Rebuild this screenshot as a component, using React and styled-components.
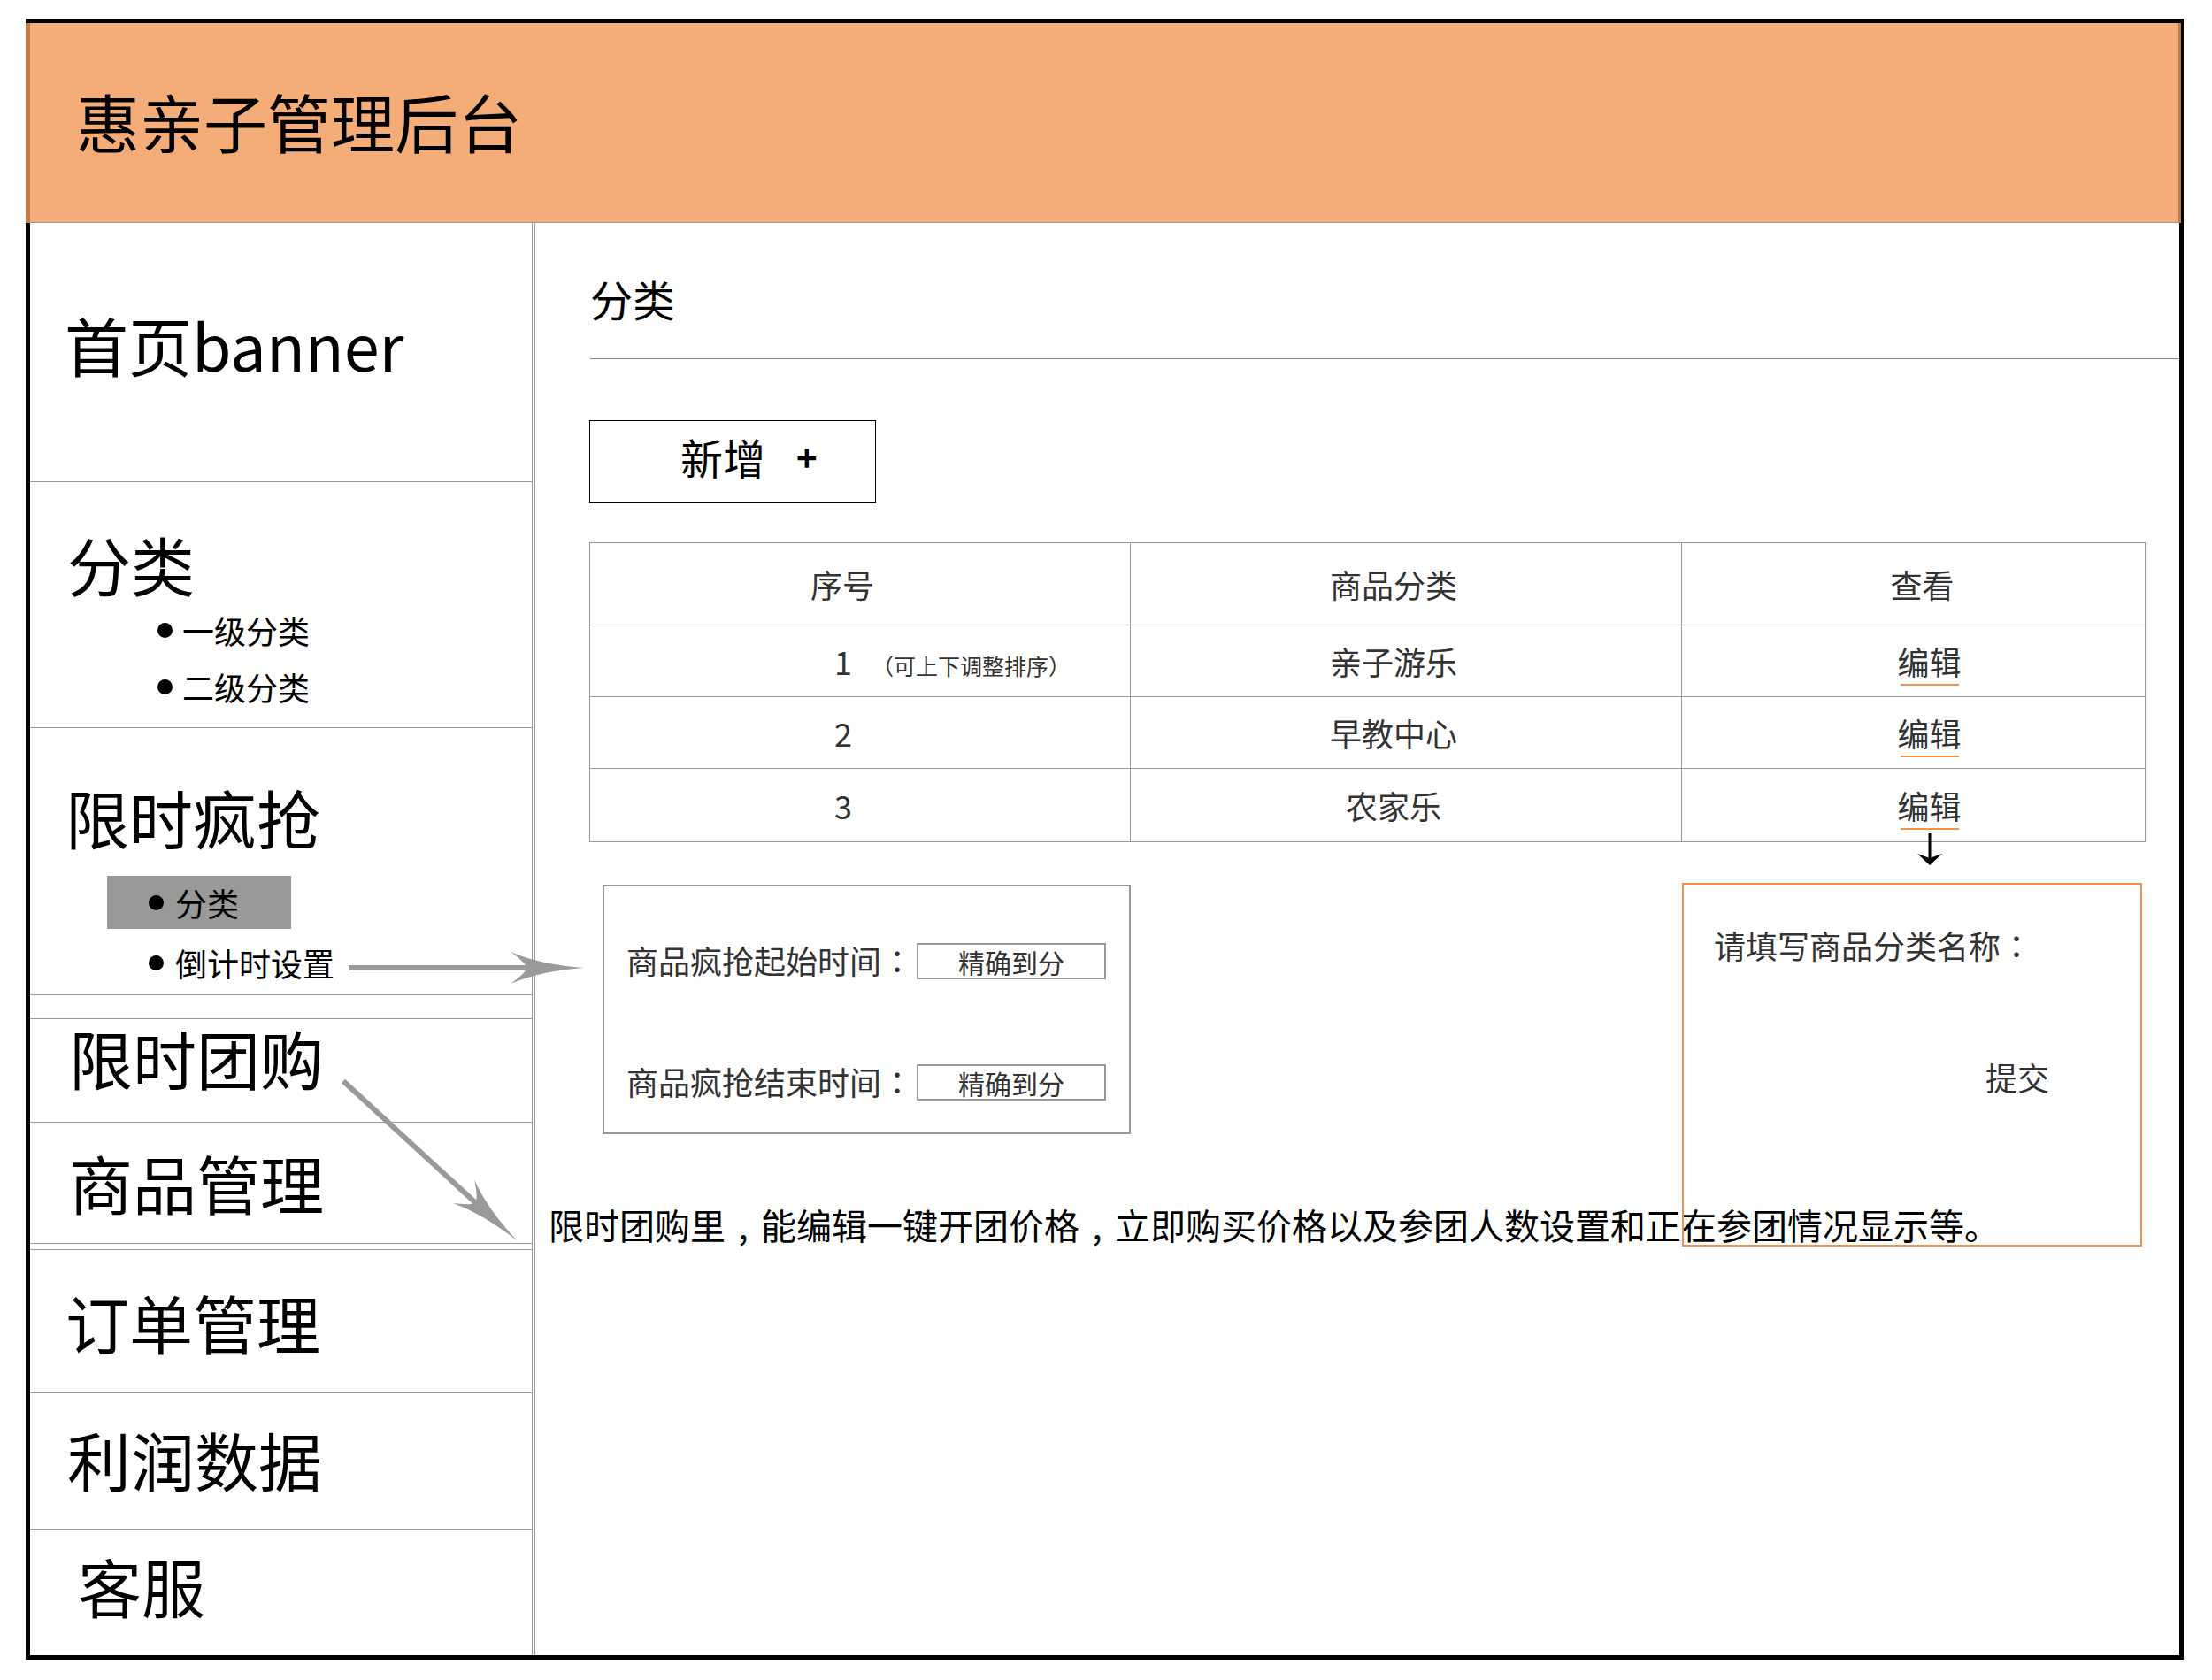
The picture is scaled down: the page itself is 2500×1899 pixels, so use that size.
import React from "react";
import styled, { createGlobalStyle } from "styled-components";

const GlobalStyle = createGlobalStyle`
  html, body { margin: 0; padding: 0; background: #fff; }
  body { font-family: "Noto Sans CJK SC", "Noto Sans", sans-serif; color: #000; }
  *, *::before, *::after { box-sizing: border-box; }
`;

const Page = styled.div`
  position: relative;
  width: 2500px;
  height: 1899px;
  padding: 21px 0 0 29px;
  overflow: hidden;
`;

const Frame = styled.div`
  width: 2439px;
  height: 1855px;
  border: 5px solid #000;
  display: flex;
  flex-direction: column;
  background: #fff;
`;

const Header = styled.header`
  flex: none;
  height: 226px;
  margin: 0 -2px 0 -5px;
  background: #f4ad78;
  border-left: 5px solid #c27a45;
  border-right: 3px solid #c27a45;
  border-bottom: 1px solid #999;
  display: flex;
  align-items: center;
  padding: 0 0 6px 52px;
  font-size: 72px;
  line-height: 1;
  color: #000;
`;

const Body = styled.div`
  flex: 1;
  display: flex;
  min-height: 0;
`;

const Sidebar = styled.nav`
  flex: none;
  width: 571px;
  border-right: 4px double #999;
  display: flex;
  flex-direction: column;
`;

const Section = styled.div`
  flex: ${(p) => (p.$h ? "none" : "1")};
  height: ${(p) => (p.$h ? `${p.$h}px` : "auto")};
  border-bottom: ${(p) => (p.$last ? "none" : "1px solid #999")};
  padding: ${(p) => p.$pt || 0}px 0 0 ${(p) => p.$pl || 0}px;
`;

const NavTitle = styled.div`
  font-size: 72px;
  line-height: 1;
  white-space: nowrap;
`;

const SubList = styled.div`
  display: flex;
  flex-direction: column;
  gap: ${(p) => p.$gap}px;
  margin: ${(p) => p.$mt}px 0 0 ${(p) => p.$ml}px;
`;

const SubItem = styled.div`
  display: flex;
  align-items: center;
  gap: ${(p) => p.$gap}px;
  height: ${(p) => p.$h}px;
  width: ${(p) => (p.$w ? `${p.$w}px` : "auto")};
  padding-left: ${(p) => p.$pl || 0}px;
  background: ${(p) => (p.$active ? "#999" : "transparent")};
  font-size: 36px;
  line-height: 1;
  white-space: nowrap;
`;

const Bullet = styled.span`
  flex: none;
  width: 17px;
  height: 17px;
  border-radius: 50%;
  background: #000;
`;

const Punct = styled.span`
  font-family: "Noto Sans CJK TC", "Noto Sans CJK SC", sans-serif;
`;

const Comma = styled.span`
  display: inline-block;
  width: 1em;
  text-align: center;
`;

const Content = styled.main`
  flex: 1;
  position: relative;
  display: flex;
  flex-direction: column;
  align-items: flex-start;
  padding-top: 61px;
`;

const PageTitle = styled.h2`
  align-self: stretch;
  margin: 0 0 0 62px;
  padding-bottom: 44px;
  border-bottom: 1px solid #888;
  font-size: 48px;
  font-weight: 400;
  line-height: 1;
`;

const AddButton = styled.div`
  margin: 69px 0 0 61px;
  width: 324px;
  height: 94px;
  border: 1px solid #000;
  display: flex;
  align-items: center;
  gap: 35px;
  padding: 0 0 12px 102px;
  font-size: 48px;
  line-height: 1;
`;

const Plus = styled.span`
  font-size: 40px;
  font-weight: 700;
`;

const Table = styled.div`
  margin: 44px 0 0 61px;
  display: grid;
  grid-template-columns: 611px 623px 524px;
  grid-template-rows: 93px 81px 81px 83px;
  border-top: 1px solid #999;
  border-left: 1px solid #999;
`;

const Cell = styled.div`
  display: flex;
  align-items: center;
  justify-content: ${(p) => p.$justify || "center"};
  padding: 0 ${(p) => p.$pr || 0}px 0 ${(p) => p.$pl || 0}px;
  border-right: 1px solid #999;
  border-bottom: 1px solid #999;
  font-size: 36px;
  line-height: 1;
  color: #333;
  white-space: nowrap;
`;

const Hint = styled.span`
  font-size: 25px;
  margin-left: 22px;
`;

const EditLink = styled.span`
  position: relative;
  &::after {
    content: "";
    position: absolute;
    left: 4px;
    right: 3px;
    bottom: -10px;
    height: 2px;
    background: #f0944d;
  }
`;

const TimeBox = styled.div`
  margin: 48px 0 0 76px;
  width: 597px;
  height: 282px;
  border: 2px solid #999;
  padding: 64px 0 0 25px;
  display: flex;
  flex-direction: column;
  gap: 96px;
`;

const TimeRow = styled.div`
  display: flex;
  align-items: center;
  height: 41px;
`;

const TimeLabel = styled.span`
  margin-bottom: 4px;
  font-size: 36px;
  line-height: 1;
  color: #333;
  white-space: nowrap;
`;

const TimeInput = styled.span`
  margin-left: 4px;
  width: 214px;
  height: 41px;
  border: 2px solid #999;
  display: flex;
  align-items: center;
  justify-content: center;
  font-size: 30px;
  line-height: 1;
  color: #333;
`;

const Note = styled.p`
  margin: 82px 0 0 15px;
  font-size: 40px;
  line-height: 1;
  color: #000;
  white-space: nowrap;
`;

const Popup = styled.div`
  position: absolute;
  left: 1296px;
  top: 746px;
  width: 520px;
  height: 411px;
  border: 2px solid #ef9450;
  padding: 50px 0 0 34px;
  display: flex;
  flex-direction: column;
  align-items: flex-start;
  font-size: 36px;
  line-height: 1;
  color: #333;
`;

const Submit = styled.span`
  margin: 113px 0 0 307px;
`;

const Overlay = styled.svg`
  position: absolute;
  left: 0;
  top: 0;
  pointer-events: none;
`;

const HEAD =
  "M-83,-18 C-60,-8 -30,-2 0,0 C-30,2 -60,8 -83,18 C-72,10 -66,5 -65,0 C-66,-5 -72,-10 -83,-18 Z";

function Annotations() {
  return (
    <Overlay width="2500" height="1899" viewBox="0 0 2500 1899">
      <line x1="394" y1="1094" x2="596" y2="1094" stroke="#9a9a9a" strokeWidth="6" />
      <path d={HEAD} fill="#9a9a9a" transform="translate(660 1094)" />
      <line x1="388" y1="1222" x2="538" y2="1360" stroke="#9a9a9a" strokeWidth="6" />
      <path d={HEAD} fill="#9a9a9a" transform="translate(585 1403) rotate(42.6)" />
      <line x1="2181" y1="942" x2="2181" y2="972" stroke="#000" strokeWidth="3" />
      <path d="M2167,965 L2181,978 L2195,965 L2181,970 Z" fill="#000" />
    </Overlay>
  );
}

const rows = [
  { n: "1", name: "亲子游乐", hint: true },
  { n: "2", name: "早教中心" },
  { n: "3", name: "农家乐" },
];

export default function App() {
  return (
    <>
      <GlobalStyle />
      <Page>
        <Frame>
          <Header>惠亲子管理后台</Header>
          <Body>
            <Sidebar>
              <Section $h={293} $pt={101} $pl={39}>
                <NavTitle>首页banner</NavTitle>
              </Section>
              <Section $h={278} $pt={56} $pl={42}>
                <NavTitle>分类</NavTitle>
                <SubList $mt={21} $ml={102} $gap={28}>
                  <SubItem $h={36} $gap={11}>
                    <Bullet />一级分类
                  </SubItem>
                  <SubItem $h={36} $gap={11}>
                    <Bullet />二级分类
                  </SubItem>
                </SubList>
              </Section>
              <Section $h={302} $pt={64} $pl={40}>
                <NavTitle>限时疯抢</NavTitle>
                <SubList $mt={31} $ml={47} $gap={8}>
                  <SubItem $h={60} $w={208} $pl={47} $gap={13} $active>
                    <Bullet />分类
                  </SubItem>
                  <SubItem $h={60} $pl={47} $gap={13}>
                    <Bullet />倒计时设置
                  </SubItem>
                </SubList>
              </Section>
              <Section $h={27} />
              <Section $h={117} $pt={7} $pl={44}>
                <NavTitle>限时团购</NavTitle>
              </Section>
              <Section $h={137} $pt={31} $pl={44}>
                <NavTitle>商品管理</NavTitle>
              </Section>
              <Section $h={7} />
              <Section $h={162} $pt={45} $pl={40}>
                <NavTitle>订单管理</NavTitle>
              </Section>
              <Section $h={154} $pt={38} $pl={42}>
                <NavTitle>利润数据</NavTitle>
              </Section>
              <Section $pt={27} $pl={54} $last>
                <NavTitle>客服</NavTitle>
              </Section>
            </Sidebar>
            <Content>
              <PageTitle>分类</PageTitle>
              <AddButton>
                <span>新增</span>
                <Plus>+</Plus>
              </AddButton>
              <Table>
                <Cell $pr={40}>序号</Cell>
                <Cell $pr={28}>商品分类</Cell>
                <Cell $pl={20}>查看</Cell>
                {rows.map((r) => (
                  <React.Fragment key={r.n}>
                    <Cell $justify="flex-start" $pl={276}>
                      <span>
                        {r.n}
                        {r.hint && (
                          <Hint>
                            <Punct>（</Punct>可上下调整排序<Punct>）</Punct>
                          </Hint>
                        )}
                      </span>
                    </Cell>
                    <Cell $pr={28}>{r.name}</Cell>
                    <Cell $pl={36}>
                      <EditLink>编辑</EditLink>
                    </Cell>
                  </React.Fragment>
                ))}
              </Table>
              <TimeBox>
                <TimeRow>
                  <TimeLabel>
                    商品疯抢起始时间<Punct>：</Punct>
                  </TimeLabel>
                  <TimeInput>精确到分</TimeInput>
                </TimeRow>
                <TimeRow>
                  <TimeLabel>
                    商品疯抢结束时间<Punct>：</Punct>
                  </TimeLabel>
                  <TimeInput>精确到分</TimeInput>
                </TimeRow>
              </TimeBox>
              <Note>
                限时团购里<Comma>,</Comma>能编辑一键开团价格<Comma>,</Comma>
                立即购买价格以及参团人数设置和正在参团情况显示等。
              </Note>
              <Popup>
                <span>
                  请填写商品分类名称<Punct>：</Punct>
                </span>
                <Submit>提交</Submit>
              </Popup>
            </Content>
          </Body>
        </Frame>
        <Annotations />
      </Page>
    </>
  );
}
